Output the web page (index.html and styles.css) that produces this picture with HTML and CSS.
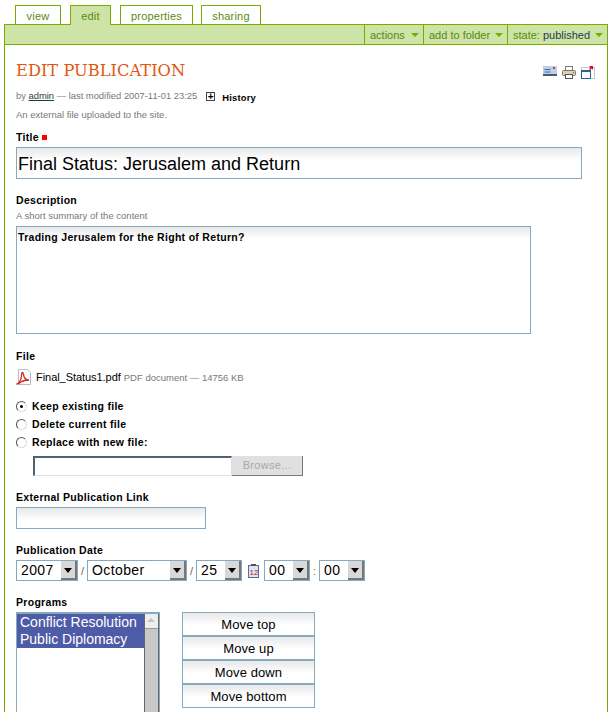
FILE: index.html
```html
<!DOCTYPE html>
<html lang="en">
<head>
    <meta charset="UTF-8">
    <title>Edit Publication</title>
    <link rel="stylesheet" href="styles.css">
</head>
<body>
    <ul class="tabs">
        <li><a href="#">view</a></li>
        <li class="selected"><a href="#">edit</a></li>
        <li><a href="#">properties</a></li>
        <li><a href="#">sharing</a></li>
    </ul>
    <div class="content">
        <div class="action-bar">
            <div class="menu menu-actions">actions <span class="arrow"></span></div>
            <div class="menu menu-folder">add to folder <span class="arrow"></span></div>
            <div class="menu menu-state">state:&nbsp;<span class="state-value">published</span> <span class="arrow"></span></div>
        </div>
        <div class="main">
            <div class="heading-row">
                <h1>Edit Publication</h1>
                <div class="doc-actions">
                    <svg width="14" height="10" viewBox="0 0 14 10"><rect width="14" height="9" fill="#bcd0e8"/><rect y="8" width="14" height="2" fill="#4a5a70"/><rect x="1.500" y="3" width="6" height="1" fill="#3a6aa8"/><rect x="1.500" y="5.500" width="6" height="1" fill="#3a6aa8"/><rect x="10" y="1" width="2" height="2" fill="#e03030"/></svg>
                    <svg width="14" height="13" viewBox="0 0 14 13"><rect x="3.500" y="0.500" width="7" height="4" fill="#fff" stroke="#777"/><rect x="0.500" y="4.500" width="13" height="5" rx="1" fill="#d8d0b0" stroke="#777"/><rect x="3.500" y="8.500" width="7" height="4" fill="#fff" stroke="#555"/><rect x="11" y="6" width="1" height="1" fill="#d04020"/></svg>
                    <svg width="14" height="13" viewBox="0 0 14 13"><rect x="0.500" y="1.500" width="13" height="11" fill="none" stroke="#888" stroke-dasharray="1 1"/><rect x="0.500" y="5" width="9" height="7.500" fill="#fff" stroke="#2f5f90"/><rect x="0" y="4" width="10" height="2" fill="#2f5f90"/><path d="M8 0h4v4l-1.300-1.500L9 4 8 3l1.500-1.700z" fill="#e00020"/></svg>
                </div>
            </div>
            <div class="byline">
                <span>by <a href="#">admin</a> — last modified 2007-11-01 23:25</span>
                <span class="history-box">+</span>
                <span class="history">History</span>
            </div>
            <p class="doc-description">An external file uploaded to the site.</p>

            <div class="field field-title">
                <label>Title <span class="required"></span></label>
                <input class="text-input title-input" type="text" value="Final Status: Jerusalem and Return">
            </div>

            <div class="field field-description">
                <label>Description</label>
                <div class="help">A short summary of the content</div>
                <textarea class="text-input description-input">Trading Jerusalem for the Right of Return?</textarea>
            </div>

            <div class="field field-file">
                <label>File</label>
                <div class="file-row">
                    <svg width="16" height="16" viewBox="0 0 16 16"><path d="M2.500 0.500h9l3 3v12h-12z" fill="#fff" stroke="#b8bcc8"/><path d="M1 15c2-1 4-4 4.500-8C5.600 5 5.500 3.500 6.500 3.500S7.500 6 8 7.500c1 2.500 3 3.500 5 3.500-3 0-6 .5-8 2-1.500 1-3 2.500-4 2z" fill="none" stroke="#d8201c" stroke-width="1.300"/></svg>
                    <span class="file-name">Final_Status1.pdf</span>
                    <span class="file-meta">PDF document — 14756 KB</span>
                </div>
                <div class="radio-row"><span class="radio checked"></span>Keep existing file</div>
                <div class="radio-row"><span class="radio"></span>Delete current file</div>
                <div class="radio-row"><span class="radio"></span>Replace with new file:</div>
                <div class="file-picker">
                    <div class="file-path"></div>
                    <div class="browse">Browse...</div>
                </div>
            </div>

            <div class="field field-link">
                <label>External Publication Link</label>
                <input class="text-input link-input" type="text">
            </div>

            <div class="field field-date">
                <label>Publication Date</label>
                <div class="date-row">
                    <div class="select select-year">2007<span class="select-btn"></span></div>
                    <span class="sep">/</span>
                    <div class="select select-month">October<span class="select-btn"></span></div>
                    <span class="sep">/</span>
                    <div class="select select-day">25<span class="select-btn"></span></div>
                    <svg class="calendar" width="11" height="14" viewBox="0 0 11 14"><rect x="0.500" y="1.500" width="10" height="12" fill="#dfe4f4" stroke="#5a6a9a"/><rect x="3" y="0" width="5" height="2" fill="#555"/><text x="1.500" y="11" font-size="8" font-family="Liberation Sans" fill="#b02020">12</text></svg>
                    <div class="select select-time">00<span class="select-btn"></span></div>
                    <span class="sep sep-colon">:</span>
                    <div class="select select-time">00<span class="select-btn"></span></div>
                </div>
            </div>

            <div class="field field-programs">
                <label>Programs</label>
                <div class="programs-row">
                    <div class="listbox">
                        <div class="list-items">
                            <div class="list-item">Conflict Resolution</div>
                            <div class="list-item">Public Diplomacy</div>
                        </div>
                        <div class="scrollbar"><div class="scroll-up"></div></div>
                    </div>
                    <div class="move-buttons">
                        <button>Move top</button>
                        <button>Move up</button>
                        <button>Move down</button>
                        <button>Move bottom</button>
                    </div>
                </div>
            </div>
        </div>
    </div>
</body>
</html>
```

FILE: styles.css
```css
* {
    box-sizing: border-box;
    margin: 0;
    padding: 0;
}
html, body {
    height: 712px;
    overflow: hidden;
}
body {
    background-color: #fff;
    color: #000;
    font-family: "Liberation Sans", Arial, sans-serif;
    font-size: 9.5px;
    padding: 5px 2px 0 4px;
}
a {
    color: inherit;
    text-decoration: none;
}

/* tabs */
.tabs {
    display: flex;
    list-style: none;
    height: 20px;
    padding-left: 11px;
    gap: 9px;
    position: relative;
    z-index: 1;
}
.tabs li {
    background-color: #fff;
    border: 1px solid #76ad00;
    border-bottom: none;
    height: 19px;
    color: #578a10;
    font-size: 11px;
    letter-spacing: 0.2px;
    line-height: 21px;
    text-align: center;
    width: 46px;
}
.tabs li:nth-child(2) {
    width: 41px;
    height: 20px;
    background-color: #cee3a6;
}
.tabs li:nth-child(3) {
    width: 73px;
}
.tabs li:nth-child(4) {
    width: 60px;
    margin-left: -1px;
}

/* green box */
.content {
    border: 1px solid #76ad00;
    border-bottom: none;
    margin-top: -1px;
    height: 700px;
}
.action-bar {
    display: flex;
    justify-content: flex-end;
    height: 20px;
    background-color: #cee3a6;
    border-bottom: 1px solid #76ad00;
}
.menu {
    display: flex;
    align-items: center;
    border-left: 1px solid #76ad00;
    color: #578a10;
    font-size: 11px;
    padding: 1px 0 0 5px;
    white-space: nowrap;
}
.menu-actions {
    width: 59px;
}
.menu-folder {
    width: 84px;
}
.menu-state {
    width: 100px;
}
.state-value {
    color: #1f3d4d;
}
.arrow {
    margin-left: auto;
    margin-right: 4px;
    width: 0;
    height: 0;
    border-left: 4px solid transparent;
    border-right: 4px solid transparent;
    border-top: 4px solid #76ad00;
}
.main {
    padding: 0 0 0 11px;
}
.heading-row {
    display: flex;
    justify-content: space-between;
    padding: 16px 12px 0 0;
    height: 44px;
}
h1 {
    color: #e2570f;
    font-family: "DejaVu Serif", serif;
    font-size: 16.3px;
    font-weight: normal;
    text-transform: uppercase;
    line-height: 20px;
}
.doc-actions {
    display: flex;
    gap: 5px;
    align-items: flex-start;
    padding-top: 5px;
}
.byline {
    display: flex;
    align-items: center;
    color: #76797c;
    font-size: 9.4px;
    height: 12px;
}
.byline a {
    color: #1f3d3d;
    text-decoration: underline;
}
.history-box {
    border: 1px solid #444;
    color: #000;
    width: 9px;
    height: 9px;
    margin-left: 9px;
    margin-top: 2px;
    font-size: 10px;
    line-height: 7px;
    text-align: center;
    font-weight: bold;
}
.history {
    color: #000;
    font-weight: bold;
    letter-spacing: 0.2px;
    margin-left: 7px;
    margin-top: 5px;
}
.doc-description {
    color: #76797c;
    margin-top: 8px;
    line-height: 12px;
}

/* form fields */
label {
    display: block;
    font-size: 10.5px;
    font-weight: bold;
    letter-spacing: 0.3px;
    line-height: 13px;
}
.field-title {
    margin-top: 10px;
}
.required {
    display: inline-block;
    width: 5px;
    height: 5px;
    background-color: #f00;
    vertical-align: 1px;
}
.text-input {
    display: block;
    border: 1px solid #86a9bd;
    background: linear-gradient(#e8e8e8, #fff 12px);
    font-family: "Liberation Sans", Arial, sans-serif;
    color: #000;
    outline: none;
}
.title-input {
    width: 566px;
    height: 32px;
    margin-top: 3px;
    font-size: 18px;
    padding: 3px 0 0 1px;
}
.field-description {
    margin-top: 15px;
}
.help {
    color: #76797c;
    line-height: 12px;
    margin-top: 3px;
}
.description-input {
    width: 515px;
    height: 108px;
    margin-top: 4px;
    font-size: 10.5px;
    font-weight: bold;
    letter-spacing: 0.3px;
    padding: 4px 1px;
    resize: none;
}
.field-file {
    margin-top: 16px;
}
.file-row {
    display: flex;
    align-items: center;
    height: 16px;
    margin-top: 6px;
}
.file-name {
    font-size: 11px;
    letter-spacing: -0.05px;
    margin-left: 4px;
}
.file-meta {
    color: #76797c;
    margin-left: 3px;
}
.radio-row {
    display: flex;
    align-items: center;
    height: 18px;
    font-size: 10.5px;
    font-weight: bold;
    letter-spacing: 0.3px;
}
.file-row + .radio-row {
    margin-top: 12px;
}
.radio {
    display: block;
    position: relative;
    width: 11px;
    height: 11px;
    border: 1px solid #555;
    border-right-color: #ddd;
    border-bottom-color: #ddd;
    border-radius: 50%;
    margin-right: 5px;
}
.radio.checked::after {
    content: "";
    position: absolute;
    left: 3px;
    top: 3px;
    width: 3px;
    height: 3px;
    background-color: #000;
    border-radius: 50%;
}
.file-picker {
    display: flex;
    margin: 5px 0 0 17px;
    width: 270px;
    height: 20px;
}
.file-path {
    flex: 1;
    border: 2px solid #4d6470;
    border-right: 1px solid #dde;
    border-bottom: 1px solid #dde;
    background-color: #fff;
}
.browse {
    width: 71px;
    background-color: #e0e0e0;
    border-right: 1px solid #777;
    border-bottom: 1px solid #777;
    color: #a8a8a8;
    font-size: 11px;
    letter-spacing: 0.3px;
    line-height: 19px;
    text-align: center;
}
.field-link {
    margin-top: 15px;
}
.link-input {
    width: 190px;
    height: 22px;
    margin-top: 3px;
}
.field-date {
    margin-top: 15px;
}
.date-row {
    display: flex;
    align-items: center;
    margin-top: 3px;
    height: 21px;
}
.select {
    position: relative;
    height: 21px;
    border: 1px solid #86a9bd;
    background-color: #fff;
    font-size: 14px;
    letter-spacing: 0.4px;
    line-height: 19px;
    padding-left: 4px;
}
.select-btn {
    position: absolute;
    right: 0;
    top: 0;
    bottom: 0;
    width: 16px;
    background-color: #d8d8d8;
    border-right: 2px solid #777;
    border-bottom: 2px solid #777;
}
.select-btn::after {
    content: "";
    position: absolute;
    left: 3px;
    top: 7px;
    border-left: 4px solid transparent;
    border-right: 4px solid transparent;
    border-top: 5px solid #000;
}
.select-year {
    width: 62px;
}
.select-month {
    width: 100px;
}
.select-day {
    width: 46px;
}
.select-time {
    width: 46px;
}
.sep {
    width: 9px;
    color: #666;
    font-size: 11px;
    text-align: center;
}
.calendar {
    margin: 0 5px 0 6px;
}
.field-programs {
    margin-top: 15px;
}
.programs-row {
    display: flex;
    gap: 22px;
    margin-top: 3px;
}
.listbox {
    display: flex;
    width: 144px;
    height: 120px;
    border: 1px solid #86a9bd;
    border-top-width: 2px;
    border-bottom: none;
}
.list-items {
    flex: 1;
    min-width: 0;
    background-color: #fff;
    color: #fff;
    font-size: 14px;
}
.list-item {
    background-color: #4e5ba6;
    height: 17px;
    line-height: 17px;
    padding-left: 3px;
    white-space: nowrap;
}
.scrollbar {
    width: 15px;
    background-color: #c8c8c8;
    border-left: 1px solid #666;
    border-right: 1px solid #666;
}
.scroll-up {
    position: relative;
    height: 15px;
    background-color: #eee;
    border-bottom: 1px solid #999;
}
.scroll-up::after {
    content: "";
    position: absolute;
    left: 2px;
    top: 4px;
    border-left: 4px solid transparent;
    border-right: 4px solid transparent;
    border-bottom: 4px solid #c4c4c4;
}
.move-buttons {
    display: flex;
    flex-direction: column;
    width: 133px;
}
.move-buttons button {
    height: 24px;
    border: 1px solid #86a9bd;
    background: linear-gradient(#e8e8e8, #fff 12px);
    font-family: "Liberation Sans", Arial, sans-serif;
    font-size: 13px;
    letter-spacing: 0.1px;
    padding-top: 1px;
    color: #000;
}
```
